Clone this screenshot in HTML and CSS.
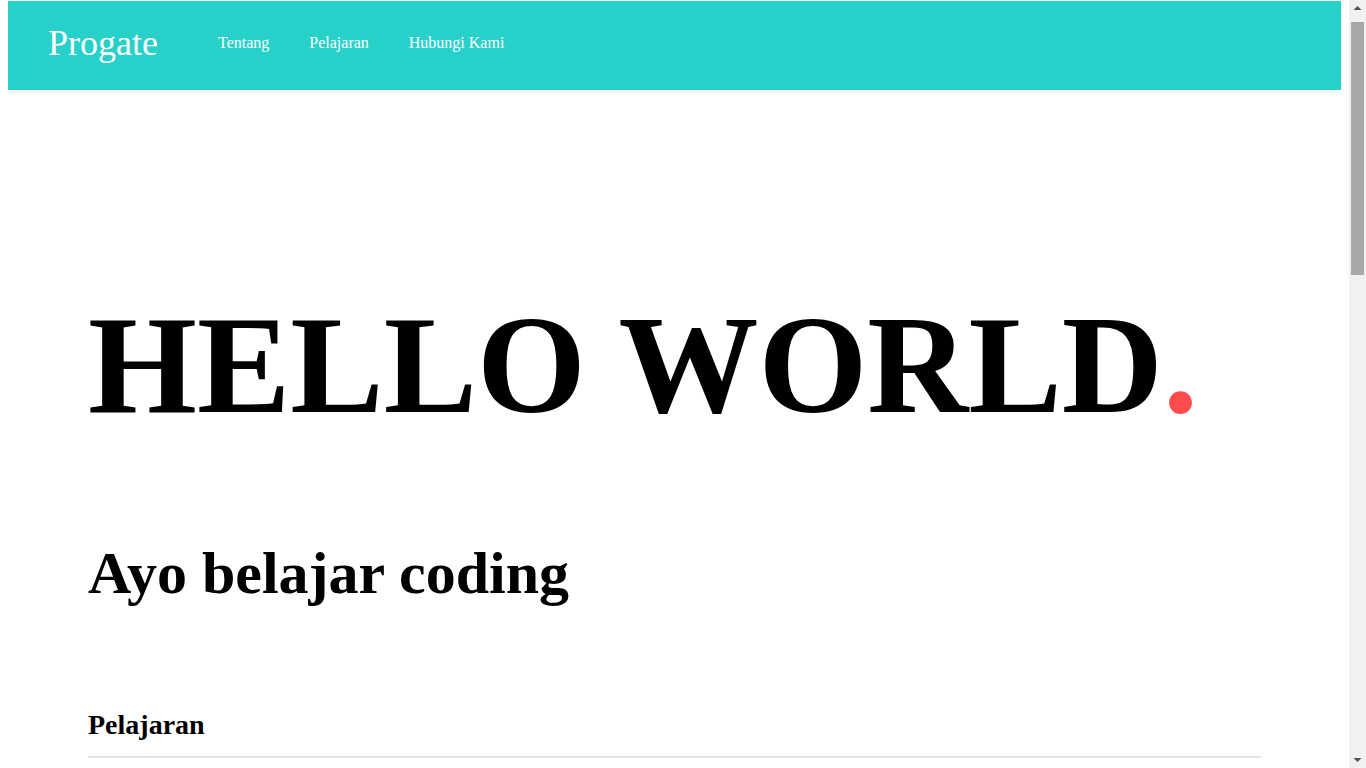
FILE: index.html
```html
<!DOCTYPE html>
<html lang="id">
<head>
<meta charset="utf-8">
<title>Progate</title>
<link rel="stylesheet" href="styles.css">
</head>
<body>
  <header class="site-header">
    <div class="logo">Progate</div>
    <nav class="nav">
      <a class="nav-link" href="#">Tentang</a>
      <a class="nav-link" href="#">Pelajaran</a>
      <a class="nav-link" href="#">Hubungi Kami</a>
    </nav>
  </header>
  <main class="main">
    <section class="hero">
      <h1 class="hero-title">HELLO WORLD<span class="hero-dot">.</span></h1>
      <p class="hero-sub">Ayo belajar coding</p>
    </section>
    <section class="lessons">
      <h2 class="section-title">Pelajaran</h2>
      <div class="lesson-list"></div>
    </section>
  </main>
  <div class="scrollbar" aria-hidden="true">
    <div class="sb-button">
      <svg width="17" height="17" viewBox="0 0 17 17"><polygon points="4.5,10 8.5,6 12.5,10" fill="#505050"/></svg>
    </div>
    <div class="sb-track">
      <div class="sb-thumb"></div>
    </div>
    <div class="sb-button">
      <svg width="17" height="17" viewBox="0 0 17 17"><polygon points="4.5,7 12.5,7 8.5,11" fill="#505050"/></svg>
    </div>
  </div>
</body>
</html>
```

FILE: styles.css
```css
html, body {
  margin: 0;
  padding: 0;
}

body {
  margin: 1px 25px 8px 8px;
  font-family: "Liberation Serif", "Times New Roman", serif;
  color: #000;
  background: #fff;
}

.site-header {
  display: flex;
  align-items: flex-start;
  height: 89px;
  padding: 0 40px;
  background: #27d1ca;
  color: #fff;
}

.logo {
  margin-top: 21px;
  font-size: 36px;
  line-height: normal;
}

.nav {
  display: flex;
  gap: 40px;
  margin-left: 60px;
  margin-top: 33px;
}

.nav-link {
  color: #fff;
  text-decoration: none;
  font-size: 16px;
  line-height: normal;
}

.main {
  padding: 0 80px;
}

.hero {
  padding-top: 194px;
}

.hero-title {
  margin: 0;
  font-size: 140px;
  font-weight: bold;
  line-height: normal;
}

.hero-dot {
  color: #ff4b4b;
}

.hero-sub {
  margin: 94px 0 0;
  font-size: 60px;
  font-weight: bold;
  line-height: normal;
}

.lessons {
  padding-top: 101px;
}

.section-title {
  margin: 0;
  padding-bottom: 15px;
  border-bottom: 2px solid #dee6e9;
  font-size: 28px;
  font-weight: bold;
  line-height: normal;
}

.lesson-list {
  min-height: 1462px;
}

/* fake classic scrollbar drawn over the right edge */
.scrollbar {
  position: fixed;
  top: 0;
  right: 0;
  bottom: 0;
  width: 17px;
  display: flex;
  flex-direction: column;
  background: #f1f1f1;
}

.sb-button {
  height: 17px;
  flex: none;
}

.sb-button svg {
  display: block;
}

.sb-track {
  flex: 1;
  padding: 5px 2px 0;
}

.sb-thumb {
  height: 253px;
  background: #a8a8a8;
}
```
